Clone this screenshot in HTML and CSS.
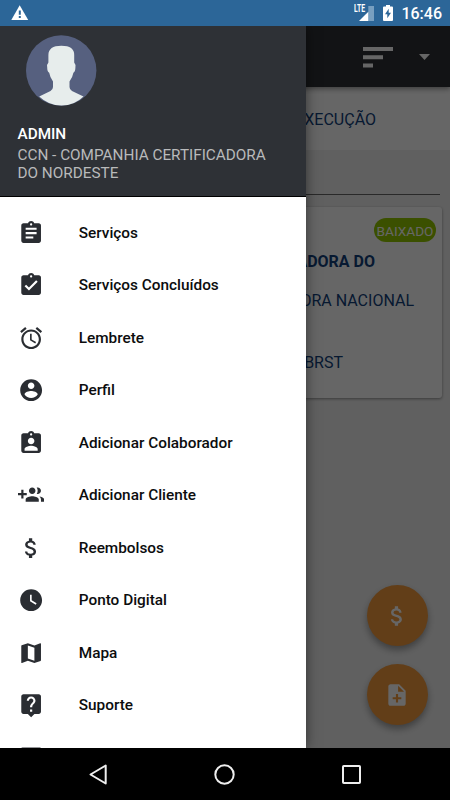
FILE: index.html
```html
<!DOCTYPE html>
<html lang="pt-BR">
<head>
<meta charset="utf-8">
<title>Serviços</title>
<link rel="stylesheet" href="styles.css">
</head>
<body>
<div class="phone">
  <header class="status">
    <svg class="warn" width="18" height="16" viewBox="0 0 18 16"><path d="M8.700.300 17.200 15H.3z" fill="#fff"/><path d="M7.800 5.500h2v4.200h-2zM7.800 11h2v2h-2z" fill="#2c6698"/></svg>
    <div class="status-right">
      <span class="lte">LTE</span>
      <svg class="signal" width="15" height="15" viewBox="0 0 15 15"><path d="M9.300 0H15v15H9.300z" fill="#789fc0"/><path d="M9.300 5.700V15H0z" fill="#fff"/></svg>
      <svg class="battery" width="10" height="16" viewBox="0 0 10 16"><path d="M3 0h4v1.600h2q1 0 1 1V15q0 1-1 1H1q-1 0-1-1V2.600q0-1 1-1h2z" fill="#fff"/><path d="M5.700 3.800 2 9.300h2.300v4L8 7.800H5.700z" fill="#2c6698"/></svg>
      <span class="time">16:46</span>
    </div>
  </header>

  <main class="app">
    <div class="toolbar">
      <svg width="30" height="21" viewBox="0 0 30 21"><path d="M0 0h30v4H0zM0 8.200h20v4H0zM0 16.400h10v4H0z"/></svg>
      <svg class="caret" width="11" height="6" viewBox="0 0 11 6"><path d="M0 0h11L5.500 6z"/></svg>
    </div>
    <div class="tabs">EXECUÇÃO</div>
    <div class="search"></div>
    <section class="card">
      <span class="badge">BAIXADO</span>
      <p class="company">ADORA DO</p>
      <p class="client">ORA NACIONAL</p>
      <p class="code">BRST</p>
    </section>
    <div class="fabs">
      <div class="fab"><svg width="26" height="26" viewBox="0 0 24 24"><path d="M11.800 10.900c-2.270-.59-3-1.200-3-2.150 0-1.090 1.010-1.850 2.700-1.850 1.780 0 2.440.85 2.500 2.100h2.210c-.07-1.720-1.120-3.300-3.210-3.810V3h-3v2.160c-1.940.42-3.500 1.680-3.500 3.610 0 2.310 1.910 3.460 4.700 4.130 2.500.6 3 1.480 3 2.410 0 .69-.49 1.790-2.700 1.790-2.060 0-2.870-.92-2.980-2.100h-2.200c.12 2.190 1.760 3.420 3.680 3.830V21h3v-2.150c1.950-.37 3.500-1.500 3.500-3.550 0-2.840-2.430-3.810-4.700-4.400z"/></svg></div>
      <div class="fab"><svg width="26" height="26" viewBox="0 0 24 24"><path d="M14 2H6c-1.100 0-1.990.9-1.990 2L4 20c0 1.100.89 2 1.990 2H18c1.100 0 2-.9 2-2V8l-6-6zm2 14h-3v3h-2v-3H8v-2h3v-3h2v3h3v2zm-3-7V3.500L18.500 9H13z"/></svg></div>
    </div>
    <div class="scrim"></div>

    <aside class="drawer">
      <div class="profile">
        <svg class="avatar" width="71" height="71" viewBox="0 0 71 71"><circle cx="35.200" cy="35.500" r="35.200" fill="#56607f"/><path d="M13.200 61.500 24.500 56q2.500-1.500 2.500-4v-5.500q-3-4-3.800-8.700-2-1-2-5.300-.4-3.500 1.200-5V20q0-9.300 13-9.300T48.200 20v7.500q1.500 1.500 1.200 5-.1 4.300-2 5.300-.8 4.700-3.900 8.700V52q0 2.500 2.500 4l11.500 5.500Q48.500 70.500 35.500 70.500T13.200 61.500z" fill="#e7edec"/></svg>
        <div class="name">ADMIN</div>
        <div class="org">CCN - COMPANHIA CERTIFICADORA DO NORDESTE</div>
      </div>
      <nav class="menu">
        <div class="item"><svg viewBox="0 0 24 24"><path d="M19 3h-4.180C14.400 1.840 13.300 1 12 1c-1.300 0-2.400.84-2.820 2H5c-1.100 0-2 .9-2 2v14c0 1.100.9 2 2 2h14c1.100 0 2-.9 2-2V5c0-1.100-.9-2-2-2zm-7 0c.55 0 1 .45 1 1s-.45 1-1 1-1-.45-1-1 .45-1 1-1zm2 14H7v-2h7v2zm3-4H7v-2h10v2zm0-4H7V7h10v2z"/></svg><span>Serviços</span></div>
        <div class="item"><svg viewBox="0 0 24 24"><path d="M19 3h-4.180C14.400 1.840 13.300 1 12 1c-1.300 0-2.400.84-2.820 2H5c-1.100 0-2 .9-2 2v14c0 1.100.9 2 2 2h14c1.100 0 2-.9 2-2V5c0-1.100-.9-2-2-2zm-7 0c.55 0 1 .45 1 1s-.45 1-1 1-1-.45-1-1 .45-1 1-1zm-2 14l-4-4 1.410-1.410L10 14.170l6.590-6.590L18 9l-8 8z"/></svg><span>Serviços Concluídos</span></div>
        <div class="item"><svg viewBox="0 0 24 24"><path d="M22 5.720l-4.600-3.860-1.290 1.530 4.600 3.860L22 5.720zM7.880 3.390L6.600 1.860 2 5.710l1.290 1.530 4.590-3.850zM12.500 8H11v6l4.750 2.850.75-1.230-4-2.370V8zM12 4c-4.970 0-9 4.030-9 9s4.020 9 9 9c4.970 0 9-4.030 9-9s-4.030-9-9-9zm0 16c-3.870 0-7-3.130-7-7s3.130-7 7-7 7 3.130 7 7-3.130 7-7 7z"/></svg><span>Lembrete</span></div>
        <div class="item"><svg viewBox="0 0 24 24"><path d="M12 2C6.480 2 2 6.480 2 12s4.480 10 10 10 10-4.480 10-10S17.520 2 12 2zm0 3c1.660 0 3 1.340 3 3s-1.340 3-3 3-3-1.340-3-3 1.340-3 3-3zm0 14.200c-2.500 0-4.710-1.280-6-3.220.03-1.990 4-3.080 6-3.080 1.990 0 5.970 1.090 6 3.080-1.290 1.940-3.500 3.220-6 3.220z"/></svg><span>Perfil</span></div>
        <div class="item"><svg viewBox="0 0 24 24"><path d="M19 3h-4.180C14.400 1.840 13.300 1 12 1c-1.300 0-2.400.84-2.820 2H5c-1.100 0-2 .9-2 2v14c0 1.100.9 2 2 2h14c1.100 0 2-.9 2-2V5c0-1.100-.9-2-2-2zm-7 0c.55 0 1 .45 1 1s-.45 1-1 1-1-.45-1-1 .45-1 1-1zm0 4c1.660 0 3 1.340 3 3s-1.340 3-3 3-3-1.340-3-3 1.340-3 3-3zm6 12H6v-1.400c0-2 4-3.100 6-3.100s6 1.100 6 3.100V19z"/></svg><span>Adicionar Colaborador</span></div>
        <div class="item"><svg viewBox="0 0 24 24"><path d="M8 10H5V7H3v3H0v2h3v3h2v-3h3v-2zm10 1c1.660 0 2.990-1.340 2.990-3S19.660 5 18 5c-.32 0-.63.05-.91.14.57.81.9 1.790.9 2.860s-.34 2.040-.9 2.860c.28.09.59.14.91.14zm-5 0c1.660 0 2.990-1.340 2.990-3S14.660 5 13 5c-1.660 0-3 1.340-3 3s1.340 3 3 3zm6.620 2.160c.83.73 1.380 1.660 1.380 2.840v2h3v-2c0-1.540-2.370-2.490-4.380-2.840zM13 13c-2 0-6 1-6 3v2h12v-2c0-2-4-3-6-3z"/></svg><span>Adicionar Cliente</span></div>
        <div class="item"><svg viewBox="0 0 24 24"><path d="M11.800 10.900c-2.270-.59-3-1.200-3-2.150 0-1.090 1.010-1.850 2.700-1.850 1.780 0 2.440.85 2.500 2.100h2.210c-.07-1.720-1.120-3.300-3.210-3.810V3h-3v2.160c-1.940.42-3.500 1.680-3.500 3.610 0 2.310 1.910 3.460 4.700 4.130 2.500.6 3 1.480 3 2.410 0 .69-.49 1.790-2.700 1.790-2.060 0-2.870-.92-2.980-2.100h-2.200c.12 2.190 1.760 3.420 3.680 3.830V21h3v-2.150c1.950-.37 3.500-1.500 3.500-3.550 0-2.840-2.430-3.810-4.700-4.400z"/></svg><span>Reembolsos</span></div>
        <div class="item"><svg viewBox="0 0 24 24"><path d="M12 2C6.500 2 2 6.500 2 12s4.500 10 10 10 10-4.500 10-10S17.500 2 12 2zm4.200 14.200L11 13V7h1.500v5.200l4.500 2.700-.8 1.300z"/></svg><span>Ponto Digital</span></div>
        <div class="item"><svg viewBox="0 0 24 24"><path d="M20.500 3l-.16.03L15 5.100 9 3 3.360 4.900c-.21.07-.36.25-.36.48V20.500c0 .28.22.5.5.5l.16-.03L9 18.900l6 2.100 5.640-1.900c.21-.07.36-.25.36-.48V3.500c0-.28-.22-.5-.5-.5zM15 19l-6-2.110V5l6 2.110V19z"/></svg><span>Mapa</span></div>
        <div class="item"><svg viewBox="0 0 24 24"><path d="M19 2H5c-1.110 0-2 .9-2 2v14c0 1.100.89 2 2 2h4l3 3 3-3h4c1.100 0 2-.9 2-2V4c0-1.100-.9-2-2-2zm-6 16h-2v-2h2v2zm2.070-7.750l-.9.920C13.450 11.900 13 12.500 13 14h-2v-.5c0-1.100.45-2.100 1.170-2.830l1.240-1.260c.37-.36.59-.86.59-1.410 0-1.100-.9-2-2-2s-2 .9-2 2H8c0-2.210 1.790-4 4-4s4 1.790 4 4c0 .88-.36 1.680-.93 2.250z"/></svg><span>Suporte</span></div>
        <div class="item"><svg viewBox="0 0 24 24"><path d="M4 2.200h16q1.500 0 1.500 2v14q0 2-2 2H4.500q-2 0-2-2v-14q0-2 1.500-2z"/></svg></div>
      </nav>
    </aside>
  </main>

  <footer class="navbar">
    <svg width="18" height="21" viewBox="0 0 18 21"><path d="M16.700 1.500v18L1.500 10.500z"/></svg>
    <svg width="21" height="21" viewBox="0 0 21 21"><circle cx="10.500" cy="10.500" r="9.200"/></svg>
    <svg width="19" height="19" viewBox="0 0 19 19"><rect x="1" y="1" width="17" height="17" rx=".8"/></svg>
  </footer>
</div>
</body>
</html>
```

FILE: styles.css
```css
* { box-sizing: border-box; }
body { margin: 0; font-family: Roboto, sans-serif; }
p { margin: 0; }
svg { display: block; flex: none; }

.phone { width: 450px; height: 800px; display: grid; grid-template-rows: 26px 722px 52px; overflow: hidden; }

.status { background: #2c6698; color: #fff; display: flex; justify-content: space-between; padding: 0 8px 0 11px; }
.warn { margin-top: 5px; }
.status-right { display: flex; align-items: flex-start; }
.lte { font-size: 10px; font-weight: 700; line-height: 10px; width: 12px; margin: 4px -7px 0 0; transform: scaleX(.68); transform-origin: left; position: relative; }
.signal { margin: 6px 9px 0 0; }
.battery { margin: 5px 8px 0 0; }
.time { font-size: 16px; font-weight: 500; line-height: 28px; }

.app { position: relative; overflow: hidden; background: #f0f0f0; display: flex; flex-direction: column; color: #123f7c; }
.toolbar { height: 61px; flex: none; background: #2e3136; display: flex; justify-content: flex-end; padding: 21px 20px 0 0; box-shadow: 0 2px 5px rgba(0,0,0,.4); z-index: 1; }
.toolbar svg { fill: #fff; }
.toolbar .caret { margin: 7px 0 0 26px; }
.tabs { height: 63px; flex: none; background: #fff; text-align: right; padding-right: 74px; font-size: 16px; line-height: 65px; }
.search { height: 45px; flex: none; border-bottom: 1px solid #666; margin: 0 10px; }
.card { height: 191px; margin: 12px 8px 0; flex: none; background: #fff; border-radius: 3px; box-shadow: 0 1px 3px rgba(0,0,0,.4); padding: 11px 6px; display: flex; flex-direction: column; align-items: flex-end; font-size: 16px; line-height: 20px; white-space: nowrap; }
.badge { width: 62px; height: 24px; line-height: 26px; border-radius: 12px; background: #95c800; color: #fff; font-size: 13.600px; text-align: center; }
.company { font-weight: 700; margin: 10px 61px 0 0; }
.client { margin: 19px 22px 0 0; }
.code { margin: 42px 93px 0 0; }
.fabs { margin: auto 22px 23px auto; display: flex; flex-direction: column; gap: 18px; }
.fab { width: 61px; height: 61px; border-radius: 50%; background: #f59b3c; display: flex; align-items: center; justify-content: center; padding-right: 1px; box-shadow: 0 4px 7px rgba(0,0,0,.35); }
.fab svg { fill: #fff; }
.scrim { position: absolute; inset: 0; background: rgba(0,0,0,.6); z-index: 2; }

.drawer { position: absolute; inset: 0 auto 0 0; width: 306px; z-index: 3; background: #fff; box-shadow: 0 0 12px rgba(0,0,0,.5); overflow: hidden; }
.profile { height: 171px; background: #2e3136; border-bottom: 1px solid #000; padding: 9px 17.500px 0; }
.avatar { margin-left: 8.500px; }
.name { margin-top: 18px; color: #fff; font-size: 15.300px; font-weight: 500; line-height: 21px; }
.org { color: #b9babb; font-size: 15.300px; line-height: 18px; margin-top: 1px; }
.menu { padding-top: 9.500px; }
.item { height: 52.500px; display: flex; align-items: center; padding-left: 17.500px; color: #0c0d0e; font-size: 15.350px; font-weight: 500; }
.item svg { width: 26.250px; height: 26.250px; fill: #2a2d32; margin-right: 35px; }

.navbar { background: #000; display: flex; justify-content: space-between; align-items: center; padding: 0 89px; }
.navbar svg { fill: none; stroke: #eee; stroke-width: 2; stroke-linejoin: round; }
```
